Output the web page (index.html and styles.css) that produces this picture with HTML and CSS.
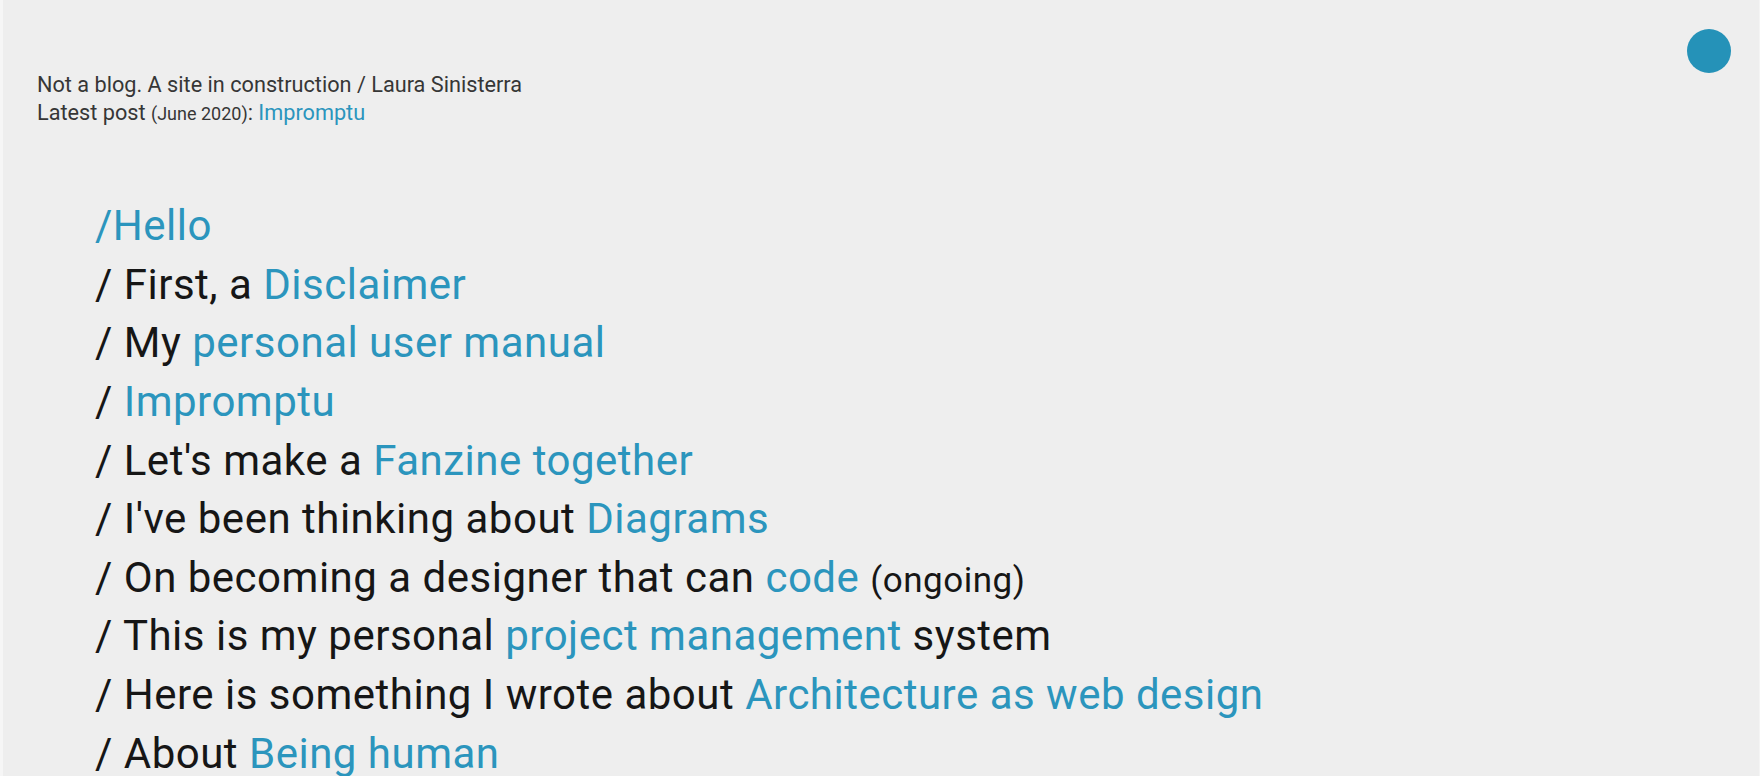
FILE: index.html
```html
<!DOCTYPE html>
<html lang="en">
<head>
<meta charset="utf-8">
<title>Not a blog — Laura Sinisterra</title>
<link rel="stylesheet" href="styles.css">
</head>
<body>
<div class="page">
  <header class="top">
    <p class="intro">Not a blog. A site in construction / Laura Sinisterra<br>Latest post <small class="date">(June 2020)</small>: <a href="#" class="link">Impromptu</a></p>
    <span class="dot" aria-hidden="true"></span>
  </header>
  <nav class="index">
    <ul class="posts">
      <li><a href="#" class="link">/Hello</a></li>
      <li>/ First, a <a href="#" class="link">Disclaimer</a></li>
      <li>/ My <a href="#" class="link">personal user manual</a></li>
      <li>/ <a href="#" class="link">Impromptu</a></li>
      <li>/ Let's make a <a href="#" class="link">Fanzine together</a></li>
      <li>/ I've been thinking about <a href="#" class="link">Diagrams</a></li>
      <li>/ On becoming a designer that can <a href="#" class="link">code</a> <small class="note">(ongoing)</small></li>
      <li>/ This is my personal <a href="#" class="link">project management</a> system</li>
      <li>/ Here is something I wrote about <a href="#" class="link">Architecture as web design</a></li>
      <li>/ About <a href="#" class="link">Being human</a></li>
    </ul>
  </nav>
</div>
</body>
</html>
```
FILE: styles.css
```css
html, body {
  margin: 0;
  padding: 0;
  background: #eeeeee;
}
body {
  font-family: Roboto, "Noto Sans", sans-serif;
  color: #161616;
  border-left: 3px solid #f6f6f6;
  border-right: 1px solid #f4f4f4;
  min-height: 776px;
  box-sizing: border-box;
}
.page {
  display: flex;
  flex-direction: column;
}
.top {
  display: flex;
  justify-content: space-between;
  align-items: flex-start;
  padding: 29px 28px 0 34px;
}
.intro {
  margin: 42px 0 0 0;
  font-size: 21.7px;
  line-height: 27.6px;
  color: #363636;
}
.date {
  font-size: 18px;
  line-height: 1;
}
.dot {
  width: 44px;
  height: 44px;
  border-radius: 50%;
  background: #2592b8;
  flex: none;
}
.link {
  color: #2b95bd;
  text-decoration: none;
}
.index {
  padding: 71px 0 0 92px;
}
.posts {
  list-style: none;
  margin: 0;
  padding: 0;
  font-size: 42px;
  letter-spacing: 0.5px;
  line-height: 58.6px;
}
.note {
  font-size: 35px;
  line-height: 1;
}
```
